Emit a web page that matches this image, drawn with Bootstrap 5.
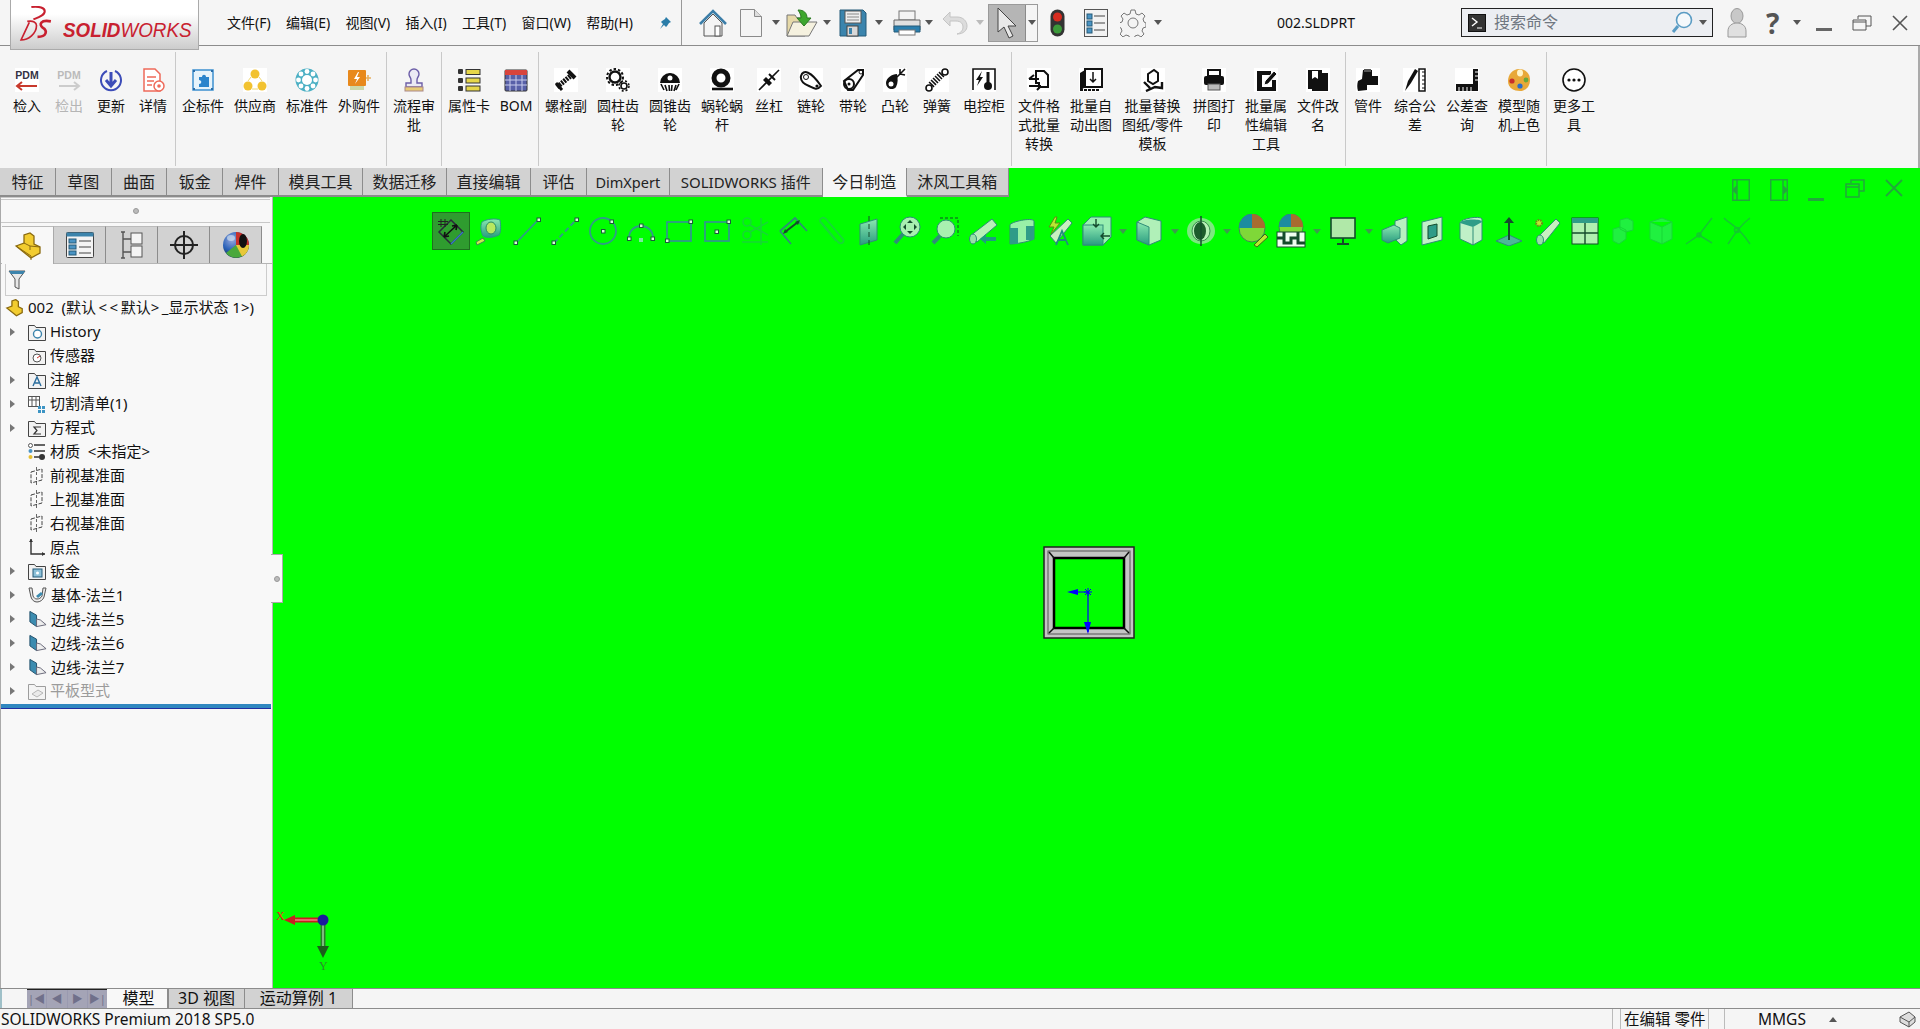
<!DOCTYPE html>
<html lang="zh-CN">
<head>
<meta charset="UTF-8">
<title>SOLIDWORKS Premium 2018 SP5.0 - 002.SLDPRT</title>
<link href="https://cdn.jsdelivr.net/npm/bootstrap@5.3.3/dist/css/bootstrap.min.css" rel="stylesheet">
<style>
    html, body { height: 100%; overflow: hidden; }
    body { background: #f5f5f5; color: #111; font-family: "Noto Sans", "Noto Sans CJK SC", "Liberation Sans", sans-serif; font-size: 14px; line-height: 19px; }
    svg { display: block; flex: none; }
    .app-shell { height: 1029px; width: 1920px; }

    /* title bar */
    .title-bar { height: 46px; border-bottom: 1px solid #8c8c8c; flex: none; }
    .logo-box { left: 10px; top: -2px; width: 189px; height: 52px; z-index: 5; background: linear-gradient(#fff 30%, #ccc); border: 1px solid #aaa; }
    .logo-mark { left: 7px; top: 7px; }
    .logo-word { left: 52px; top: 17px; color: #c8202f; font: italic 400 20px/28px "Liberation Sans", sans-serif; white-space: nowrap; transform: scaleX(.94); transform-origin: left; }
    .logo-word b { font-weight: 700; }
    .menu-zone { width: 682px; padding: 0 9px 0 227px; height: 45px; gap: 15.3px; border-right: 1px solid #999; flex: none; }
    .menu-item { white-space: nowrap; font-size: 14px; }
    .dd { width: 0; height: 0; border: 4px solid transparent; border-top: 5px solid #555; border-bottom: 0; flex: none; }
    .dd-off { border-top-color: #bbb; }
    .sp3 { margin-left: 3px; } .sp4 { margin-left: 4px; } .sp5 { margin-left: 5px; } .sp6 { margin-left: 6px; }
    .sp8 { margin-left: 8px; } .sp9 { margin-left: 9px; } .sp10 { margin-left: 10px; } .sp12 { margin-left: 12px; }
    .sp13 { margin-left: 13px; } .sp14 { margin-left: 14px; } .sp15 { margin-left: 15px; } .sp17 { margin-left: 17px; }
    .sp19 { margin-left: 19px; } .sp20 { margin-left: 20px; }
    .pick-tool { width: 50px; height: 38px; border: 1px solid #9a9a9a; }
    .pick-on { width: 37px; background: #b5b5b5; border-right: 1px solid #8a8a8a; }
    .file-name { width: 73px; margin-left: 115px; white-space: nowrap; font-size: 14px; text-align: center; }
    .search-box { width: 252px; height: 29px; margin-left: 111px; background: #eceef2; border: 1px solid #222; padding: 0 5px 0 6px; }
    .search-text { margin-left: 8px; font-size: 16px; color: #6f7680; }
    .help-mark { font-size: 28px; line-height: 1; font-weight: 700; color: #555; }

    /* ribbon */
    .ribbon { height: 122px; padding-left: 5px; flex: none; border-right: 2px solid #aaa; }
    .rib-group { padding: 0 1px; margin: 6px 0 2px; border-right: 1px solid #c9c9c9; }
    .rib-group:last-child { border-right: 0; }
    .rib-btn { width: 52px; padding: 16px 3px 0; text-align: center; }
    .rib-btn svg { margin: 0 auto 4px; }
    .rib-sm { width: 42px; }
    .rib-wide { width: 71px; padding-left: 0; padding-right: 0; }
    .rib-off { color: #b5b5b5; }

    /* work area */
    .work-area { background: #0f0; min-height: 0; }
    .tab-row { height: 29px; flex: none; }
    .cm-tab { height: 29px; width: 55.8px; font-size: 16px; line-height: 28px; text-align: center; white-space: nowrap; background: #d2d2d2; border-right: 1px solid #8c8c8c; border-bottom: 2px solid #8c8c8c; color: #222; flex: none; }
    .cm-tab4 { width: 84px; }
    .cm-tab5 { width: 102px; }
    .cm-dim { width: 83px; font-size: 14.5px; }
    .cm-addin { width: 153px; font-size: 15px; }
    .cm-tab-on { background: #f5f5f5; border-bottom-color: #f5f5f5; }
    .win-ctl { padding: 11px 17px 0 0; gap: 20px; }
    .win-ctl svg { stroke: #22a83c; }
    .main-row { min-height: 0; }
    .side-panel { width: 273px; background: #f8f8f8; border-left: 1px solid #aaa; border-right: 1px solid #b5b5b5; font-size: 15px; flex: none; }
    .grip-row { height: 26px; margin-right: 2px; border-top: 3px double #c8c8c8; border-bottom: 1px solid #c8c8c8; }
    .grip-dot { width: 6px; height: 6px; border-radius: 50%; background: #bbb; border: 1px solid #999; }
    .pane-tabs { margin-top: 3px; height: 38px; padding-left: 1px; border-bottom: 1px solid #b5b5b5; }
    .pane-tab { width: 52px; height: 37px; background: #d2d2d2; border-right: 1px solid #8c8c8c; border-top: 1px solid #bbb; }
    .pane-tab-on { background: #f8f8f8; height: 38px; border-right: 1px solid #aaa; }
    .filter-box { margin: 0 5px 0 4px; height: 32px; border: 1px solid #ccc; border-top: 0; padding-left: 2px; }
    .tree-list { margin: 0; padding: 0; list-style: none; }
    .tree-row { height: 23.95px; white-space: nowrap; }
    .tree-arrow { width: 0; height: 0; margin-left: 9px; border: 4px solid transparent; border-left: 5px solid #777; border-right: 0; flex: none; }
    .tree-slot { width: 27px; flex: none; }
    .tree-arrow + svg { margin-left: 13px; }
    .tree-root { margin-left: 4px; }
    .tree-label { position: relative; margin-left: 4px; }
    .tree-off { color: #9b9b9b; }
    .tree-end { height: 5px; margin: 1px 1px 0 0; background: #3088c0; border-bottom: 1px solid #2030a0; }
    .sash-grip { left: 271px; top: 357px; width: 12px; height: 49px; background: #f8f8f8; border: 1px solid #aaa; border-left: 0; z-index: 3; }
    .hud-bar { padding: 15px 0 0 159px; }
    .hud-cell { width: 38px; height: 38px; }
    .hud-on { background: #2f9c2f; outline: 1px solid #1f6e1f; outline-offset: -1px; }
    .hud-dd { width: 14px; height: 38px; }
    .hud-dd .dd { border-top-color: #3c9c4c; }
    .part-view { left: 770px; top: 349px; }
    .triad-view { left: 3px; top: 711px; }

    /* bottom */
    .sheet-row { height: 21px; flex: none; border-top: 1px solid #8c8c8c; border-bottom: 1px solid #8c8c8c; }
    .sheet-edge { width: 2px; background: #9fc0c8; }
    .sheet-nav { margin-left: 25px; width: 80px; background: #9a9ab0; border-top: 1px solid #222; gap: 1px; }
    .sheet-nav span { flex: 1; background: #a4a4b6; color: #70708a; font-size: 11px; line-height: 18px; text-align: center; }
    .sheet-tab { font-size: 16px; line-height: 18px; text-align: center; background: #d2d2d2; border-right: 1px solid #8c8c8c; white-space: nowrap; }
    .sheet-a { width: 61px; background: #f8f8f8; padding-left: 3px; }
    .sheet-b { width: 77px; border-left: 1px solid #8c8c8c; }
    .sheet-c { width: 108px; }
    .status-row { height: 20px; font-size: 15.5px; line-height: 20px; flex: none; white-space: nowrap; }
    .status-name { width: 1612px; padding-left: 1px; flex: none; }
    .status-gap { width: 8px; border-left: 1px solid #bbb; flex: none; }
    .status-edit { width: 89px; padding-left: 3px; font-size: 15.5px; border-left: 1px solid #bbb; border-right: 1px solid #bbb; flex: none; }
    .status-units { margin-left: 15px; padding-left: 33px; border-left: 1px solid #bbb; flex: 1; }
    .status-up { width: 0; height: 0; margin-left: 23px; border: 4px solid transparent; border-bottom: 5px solid #555; border-top: 0; }
</style>
</head>
<body>
<svg width="0" height="0" class="position-absolute">
    <defs>
        <linearGradient id="teal" x1="0" y1="0" x2="0" y2="1"><stop offset="0" stop-color="#8be8b0"/><stop offset="1" stop-color="#2a9c80"/></linearGradient>
        <radialGradient id="ball" cx=".35" cy=".3" r=".8"><stop offset="0" stop-color="#9ad"/><stop offset=".5" stop-color="#2a62b8"/><stop offset="1" stop-color="#123"/></radialGradient>
    </defs>
    <symbol id="fld" viewBox="0 0 18 18"><path d="M.5 5V2.5h6l1.5 2h9.5v13H.5z" fill="#f2f2f2" stroke="#444"/></symbol>
    <symbol id="plane" viewBox="0 0 18 18"><path d="M3 5l11-3v11l-11 3z" fill="none" stroke="#444" stroke-dasharray="4 1.5"/><path d="M8.500 0v18" stroke="#666" stroke-dasharray="3 2"/></symbol>
    <symbol id="edge" viewBox="0 0 20 18"><path d="M2 1l7 4v12l-7-5z" fill="#3c8cb0" stroke="#1d4d68"/><path d="M9 17l10-2-6-5-4-1z" fill="#eee" stroke="#667"/></symbol>
</svg>

<div class="app-shell d-flex flex-column position-relative">
    <!-- title bar -->
    <div class="title-bar d-flex align-items-center position-relative">
        <div class="logo-box position-absolute">
            <svg class="logo-mark position-absolute" width="37" height="36" viewBox="0 0 36 35" fill="none" stroke="#c8202f" stroke-width="2"><path d="M13 1C21 0 26 2 26 5 26 9 20 11 15 13" /><path d="M32 15C22 13 20 18 24 21 29 24 28 30 19 30" stroke-width="2.6"/><path d="M9 15C15 14 18 16 18 19 18 27 10 33 3 33L11 16" stroke-width="1.6"/></svg>
            <span class="logo-word position-absolute"><b>SOLID</b>WORKS</span>
        </div>
        <div class="menu-zone d-flex align-items-center">
            <span class="menu-item">文件(F)</span><span class="menu-item">编辑(E)</span><span class="menu-item">视图(V)</span><span class="menu-item">插入(I)</span><span class="menu-item">工具(T)</span><span class="menu-item">窗口(W)</span><span class="menu-item">帮助(H)</span>
            <svg class="ms-auto" width="14" height="14" viewBox="0 0 14 14"><path d="M8 1l5 5-2 1-2 3-1 1-2-2-4 4 3-5-2-2 1-1 3-2z" fill="#2a7ca8"/></svg>
        </div>
        <svg class="sp17" width="28" height="28" viewBox="0 0 28 28"><path d="M5 14v13h18V14L14 5z" fill="#f4f4f4" stroke="#555"/><path d="M1 15L14 2l13 13" fill="none" stroke="#3c7ea8" stroke-width="2.6"/><rect x="16" y="17" width="5" height="10" fill="#fff" stroke="#555"/></svg>
        <svg class="sp13" width="22" height="28" viewBox="0 0 22 28"><path d="M.5.5h14l7 7v20H.5z" fill="#f4f4f4" stroke="#8a8a8a"/><path d="M14.5.5v7h7" fill="#ddd" stroke="#8a8a8a"/></svg>
        <span class="dd sp10"></span>
        <svg class="sp6" width="32" height="28" viewBox="0 0 32 28"><path d="M1 27V6h8l2 3h8v18z" fill="#e6d9a8" stroke="#777"/><path d="M1 27l6-14h24l-8 14z" fill="#f5f1df" stroke="#777"/><path d="M12 1c6 0 9 3 9 8h4l-7 8-7-8h4c0-3-1-5-3-8z" fill="#3ea62e" stroke="#2a7a20"/></svg>
        <span class="dd sp5"></span>
        <svg class="sp8" width="28" height="28" viewBox="0 0 28 28"><path d="M1 1h23l3 3v23H1z" fill="#3b84ad" stroke="#245a78"/><rect x="6" y="2" width="16" height="12" fill="#eee" stroke="#555"/><path d="M8 5h12M8 8h12M8 11h12" stroke="#888"/><rect x="8" y="17" width="11" height="10" fill="#d8d8d8" stroke="#444"/><rect x="10" y="19" width="3" height="6" fill="#3b84ad"/></svg>
        <span class="dd sp8"></span>
        <svg class="sp9" width="30" height="26" viewBox="0 0 30 26"><rect x="7" y="1" width="16" height="9" fill="#f4f4f4" stroke="#777"/><path d="M2 10h26v10H2z" fill="#e0e0e0" stroke="#666"/><path d="M2 16h26v6H2z" fill="#2b7fae" stroke="#245a78"/><rect x="7" y="20" width="16" height="5" fill="#fff" stroke="#777"/></svg>
        <span class="dd sp3"></span>
        <svg class="sp8" width="27" height="26" viewBox="0 0 27 26"><path d="M9 2L2 9l7 7V11h6c5 0 7 3 7 6s-2 6-6 7c7 0 10-4 10-8 0-5-4-9-10-9H9z" fill="#dcdcdc" stroke="#c4c4c4"/></svg>
        <span class="dd dd-off sp8"></span>
        <div class="pick-tool d-flex align-items-stretch sp4">
            <div class="pick-on d-flex align-items-center justify-content-center"><svg width="22" height="32" viewBox="0 0 22 32"><path d="M2 1v24l6-5 5 11 4-2-5-10h8z" fill="#e8e8e8" stroke="#444"/></svg></div>
            <div class="flex-grow-1 d-flex align-items-center justify-content-center"><span class="dd"></span></div>
        </div>
        <svg class="sp12" width="15" height="28" viewBox="0 0 15 28"><rect x=".5" y=".5" width="14" height="27" rx="7" fill="#333"/><circle cx="7.5" cy="8" r="4.5" fill="#d62c20"/><circle cx="7.5" cy="20" r="4.5" fill="#3c9a3a"/></svg>
        <svg class="sp19" width="24" height="28" viewBox="0 0 24 28"><rect x=".5" y=".5" width="23" height="27" fill="#f2f2f2" stroke="#555"/><rect x="3" y="5" width="5" height="5" fill="#4a94c4" stroke="#245a78"/><rect x="3" y="12" width="5" height="5" fill="#4a94c4" stroke="#245a78"/><rect x="3" y="19" width="5" height="5" fill="#4a94c4" stroke="#245a78"/><path d="M10 7h11M10 14h11M10 21h11" stroke="#444"/></svg>
        <svg class="sp12" width="26" height="28" viewBox="0 0 26 28"><path d="M11 1h4l1 4 3 1 3-2 3 3-2 3 1 3 2 1v4l-3 1-1 3 2 3-3 3-3-2-3 1-1 3h-4l-1-3-3-1-3 2-3-3 2-3-1-3-2-1v-4l3-1 1-3-2-3 3-3 3 2 3-1z" fill="#f4f4f4" stroke="#777"/><circle cx="13" cy="14" r="5" fill="#f4f4f4" stroke="#777"/></svg>
        <span class="dd sp8"></span>
        <span class="file-name">002.SLDPRT</span>
        <div class="search-box d-flex align-items-center">
            <svg width="18" height="18" viewBox="0 0 18 18"><rect x=".5" y=".5" width="17" height="17" fill="#333" stroke="#111"/><path d="M4 4l5 4-5 4" fill="none" stroke="#fff" stroke-width="1.4"/><path d="M9 14h5" stroke="#fff"/></svg>
            <span class="search-text">搜索命令</span>
            <svg class="ms-auto" width="22" height="24" viewBox="0 0 22 24"><circle cx="13" cy="9" r="7.5" fill="#f4f8fb" stroke="#5a9cc4" stroke-width="1.6"/><path d="M7 15l-5 6" stroke="#5a9cc4" stroke-width="3"/></svg>
            <span class="dd sp6"></span>
        </div>
        <svg class="sp14" width="20" height="30" viewBox="0 0 20 30"><ellipse cx="10" cy="8" rx="6" ry="7.5" fill="#c8c8c8" stroke="#999"/><path d="M1 29v-6c0-5 4-8 9-8s9 3 9 8v6z" fill="#e0e0e0" stroke="#999"/></svg>
        <span class="sp19 help-mark">?</span>
        <span class="dd sp14"></span>
        <svg class="sp15" width="16" height="16" viewBox="0 0 16 16"><path d="M0 14.5h16" stroke="#666" stroke-width="3"/></svg>
        <svg class="sp20" width="20" height="16" viewBox="0 0 20 16"><path d="M6 4V1h13v10h-5M1 5h13v10H1z" fill="none" stroke="#555"/><path d="M1 7h13" stroke="#555"/></svg>
        <svg class="sp20" width="16" height="16" viewBox="0 0 16 16"><path d="M1 1l14 14M15 1L1 15" stroke="#555" stroke-width="1.6"/></svg>
    </div>

    <!-- ribbon -->
    <div class="ribbon d-flex align-items-stretch">
        <div class="rib-group d-flex">
            <div class="rib-btn rib-sm"><svg width="24" height="24" viewBox="0 0 24 24"><rect width="24" height="24" fill="#fff"/><text x="12" y="11" text-anchor="middle" font-family="Liberation Sans" font-size="10.5" font-weight="700" fill="#334">PDM</text><path d="M2 18h20M7 14l-5 4 5 4" fill="none" stroke="#c8392c" stroke-width="2"/></svg>检入</div>
            <div class="rib-btn rib-sm rib-off"><svg width="24" height="24" viewBox="0 0 24 24"><text x="12" y="11" text-anchor="middle" font-family="Liberation Sans" font-size="10.5" font-weight="700" fill="#bbb">PDM</text><path d="M2 18h20M17 14l5 4-5 4" fill="none" stroke="#ccc" stroke-width="2"/></svg>检出</div>
            <div class="rib-btn rib-sm"><svg width="24" height="24" viewBox="0 0 24 24"><path d="M8 3a10 10 0 1 0 8 0" fill="none" stroke="#3c4cb8" stroke-width="2"/><path d="M12 4v13M7 12l5 6 5-6" fill="none" stroke="#3c4cb8" stroke-width="3"/></svg>更新</div>
            <div class="rib-btn rib-sm"><svg width="24" height="24" viewBox="0 0 24 24"><path d="M3 1h11l5 5v17H3z" fill="#fff" stroke="#ee6a5a" stroke-width="1.5"/><path d="M6 9h9M6 13h7M6 17h5" stroke="#ee6a5a" stroke-width="1.5"/><circle cx="18" cy="18" r="5" fill="#fff" stroke="#ee6a5a" stroke-width="1.5"/><circle cx="18" cy="18" r="1.8" fill="#ee6a5a"/></svg>详情</div>
        </div>
        <div class="rib-group d-flex">
            <div class="rib-btn"><svg width="24" height="24" viewBox="0 0 24 24"><rect x="2" y="2" width="20" height="20" fill="#e6f3fb" stroke="#3c90d0" stroke-width="1.5"/><path d="M8 9h3c0-3 4-3 4 0h3v10H8v-3c3 0 3-4 0-4z" fill="#2a84cc"/><path d="M2 2h2v2H2zM20 2h2v2h-2zM2 20h2v2H2zM20 20h2v2h-2z" fill="#2a6ca8"/></svg>企标件</div>
            <div class="rib-btn"><svg width="24" height="24" viewBox="0 0 24 24"><rect width="24" height="24" fill="#fff"/><circle cx="12" cy="6" r="4.5" fill="#f2c230"/><circle cx="5" cy="18" r="4.5" fill="#f2c230"/><circle cx="19" cy="18" r="4.5" fill="#f2c230"/><path d="M8 9l-3 4M16 9l3 4M9 21h6" stroke="#f2d870"/></svg>供应商</div>
            <div class="rib-btn"><svg width="24" height="24" viewBox="0 0 24 24"><circle cx="12" cy="12" r="11.5" fill="#4cb0c4"/><circle cx="12" cy="12" r="5" fill="#fff"/><g fill="#fff"><circle cx="12" cy="3.5" r="2.4"/><circle cx="18" cy="6" r="2.4"/><circle cx="20.5" cy="12" r="2.4"/><circle cx="18" cy="18" r="2.4"/><circle cx="12" cy="20.5" r="2.4"/><circle cx="6" cy="18" r="2.4"/><circle cx="3.5" cy="12" r="2.4"/><circle cx="6" cy="6" r="2.4"/></g></svg>标准件</div>
            <div class="rib-btn"><svg width="24" height="24" viewBox="0 0 24 24"><rect x="1" y="2" width="18" height="16" rx="1" fill="#e8891c"/><path d="M11 4l-4 7h3l-2 5 5-7h-3l2-5z" fill="#fff"/><path d="M19 10h5M21 7v6" stroke="#e8b060" stroke-width="1.6"/><rect x="3" y="18" width="14" height="4" fill="#cdd8a8"/></svg>外购件</div>
        </div>
        <div class="rib-group d-flex">
            <div class="rib-btn"><svg width="24" height="24" viewBox="0 0 24 24"><path d="M9 12c0-3-2-3-2-6a5 5 0 0 1 10 0c0 3-2 3-2 6v3h5v4H4v-4h5z" fill="#eceaf4" stroke="#6c5ea8" stroke-width="1.4"/><rect x="3" y="19" width="18" height="4" fill="#e8cc78" stroke="#a88"/></svg>流程审批</div>
        </div>
        <div class="rib-group d-flex">
            <div class="rib-btn"><svg width="24" height="24" viewBox="0 0 24 24"><g fill="#333"><rect x="1" y="1" width="5" height="5" rx="1"/><rect x="1" y="10" width="5" height="5" rx="1"/><rect x="1" y="18" width="5" height="5" rx="1"/></g><g fill="#e6d64a" stroke="#333"><rect x="9" y="1.5" width="14" height="5"/><rect x="9" y="10" width="14" height="5"/><rect x="9" y="18" width="14" height="5"/></g></svg>属性卡</div>
            <div class="rib-btn rib-sm"><svg width="24" height="24" viewBox="0 0 24 24"><rect x="1" y="2" width="22" height="21" rx="1" fill="#5860a8" stroke="#333"/><rect x="1" y="2" width="22" height="5" fill="#d8443c"/><path d="M6 7v16M12 7v16M18 7v16M1 12h22M1 17h22" stroke="#c8ccec"/></svg>BOM</div>
        </div>
        <div class="rib-group d-flex">
            <div class="rib-btn"><svg width="24" height="24" viewBox="0 0 24 24"><rect width="24" height="24" fill="#fff"/><path d="M3 19L19 6" stroke="#111" stroke-width="5" stroke-dasharray="2 1"/><path d="M14 3l7 7" stroke="#111" stroke-width="4"/><path d="M2 15l6 7" stroke="#111" stroke-width="3"/></svg>螺栓副</div>
            <div class="rib-btn"><svg width="24" height="24" viewBox="0 0 24 24"><rect width="24" height="24" fill="#fff"/><circle cx="9" cy="9" r="5.5" fill="none" stroke="#111" stroke-width="2.4"/><circle cx="9" cy="9" r="8" fill="none" stroke="#111" stroke-width="2" stroke-dasharray="2.5 2"/><circle cx="18" cy="18" r="3" fill="none" stroke="#111" stroke-width="1.6"/><circle cx="18" cy="18" r="5" fill="none" stroke="#111" stroke-width="1.5" stroke-dasharray="2 2"/></svg>圆柱齿轮</div>
            <div class="rib-btn"><svg width="24" height="24" viewBox="0 0 24 24"><rect width="24" height="24" fill="#fff"/><path d="M2 15A10 10 0 0 1 22 15" fill="#111"/><circle cx="12" cy="10" r="3.5" fill="#fff" stroke="#111" stroke-width="2"/><path d="M3 16l3 6M7 17l2 6M11 17l.5 6M14 17l-.5 6M18 17l-2 6M21 16l-3 6" stroke="#111" stroke-width="1.6"/></svg>圆锥齿轮</div>
            <div class="rib-btn"><svg width="24" height="24" viewBox="0 0 24 24"><rect width="24" height="24" fill="#fff"/><circle cx="11" cy="10" r="7" fill="none" stroke="#111" stroke-width="5"/><path d="M2 21h21" stroke="#111" stroke-width="2.6"/></svg>蜗轮蜗杆</div>
            <div class="rib-btn rib-sm"><svg width="24" height="24" viewBox="0 0 24 24"><rect width="24" height="24" fill="#fff"/><path d="M2 22L22 2" stroke="#111" stroke-width="1.6"/><path d="M6 12l6 6 3-3-6-6z" fill="#111"/><path d="M12 6l6 6" stroke="#111" stroke-width="2"/></svg>丝杠</div>
            <div class="rib-btn rib-sm"><svg width="24" height="24" viewBox="0 0 24 24"><rect width="24" height="24" fill="#fff"/><path d="M2 8c2-7 10-5 20 10-4 5-8 2-12 0-5-2-9-5-8-10z" fill="none" stroke="#111" stroke-width="2"/><circle cx="7" cy="9" r="2.5" fill="none" stroke="#111"/><circle cx="18" cy="18" r="1.6" fill="#111"/></svg>链轮</div>
            <div class="rib-btn rib-sm"><svg width="24" height="24" viewBox="0 0 24 24"><rect width="24" height="24" fill="#fff"/><path d="M3 13L17 2h5v5L12 22H7z" fill="none" stroke="#111" stroke-width="2"/><circle cx="8" cy="16" r="5" fill="none" stroke="#111" stroke-width="2"/><circle cx="8" cy="16" r="1.5" fill="#111"/><circle cx="20" cy="4" r="2" fill="none" stroke="#111"/></svg>带轮</div>
            <div class="rib-btn rib-sm"><svg width="24" height="24" viewBox="0 0 24 24"><rect width="24" height="24" fill="#fff"/><path d="M3 15c0-5 6-9 11-9 1 5 1 9-1 13-3 4-10 2-10-4z" fill="#111"/><circle cx="8" cy="16" r="2.5" fill="#fff"/><path d="M14 9l8-8M17 6l5 1M17 6l0-5" stroke="#111" stroke-width="1.6"/></svg>凸轮</div>
            <div class="rib-btn rib-sm"><svg width="24" height="24" viewBox="0 0 24 24"><rect width="24" height="24" fill="#fff"/><circle cx="20" cy="4" r="3" fill="none" stroke="#111" stroke-width="1.6"/><circle cx="4" cy="20" r="3" fill="none" stroke="#111" stroke-width="1.6"/><path d="M6 17L17 6" stroke="#111" stroke-width="7" stroke-dasharray="1.6 1.2"/></svg>弹簧</div>
            <div class="rib-btn"><svg width="24" height="24" viewBox="0 0 24 24"><rect width="24" height="24" fill="#fff"/><path d="M1 22V1h22v21" fill="none" stroke="#111" stroke-width="1.6"/><path d="M10 3L4 12h3l-2 6 6-9H8z" fill="#111"/><path d="M16 4v12" stroke="#111" stroke-width="3"/><circle cx="16" cy="18" r="4" fill="#111"/></svg>电控柜</div>
        </div>
        <div class="rib-group d-flex">
            <div class="rib-btn"><svg width="24" height="24" viewBox="0 0 24 24"><rect width="24" height="24" fill="#fff"/><path d="M9 3h8l4 4v12h-9v-4H9z" fill="#fff" stroke="#111" stroke-width="2"/><path d="M2 11h10M7 7l-5 4M2 18h12M10 22l4-4" stroke="#111" stroke-width="2"/></svg>文件格式批量转换</div>
            <div class="rib-btn"><svg width="24" height="24" viewBox="0 0 24 24"><rect width="24" height="24" fill="#fff"/><path d="M1 23V5l5-3v17z" fill="#111"/><rect x="6" y="1" width="17" height="18" fill="#fff" stroke="#111" stroke-width="2"/><path d="M14 4v10M11 11l3 3 3-3" fill="none" stroke="#111" stroke-width="1.5"/><path d="M1 22h19" stroke="#111" stroke-width="2" stroke-dasharray="3 1"/></svg>批量自动出图</div>
            <div class="rib-btn rib-wide"><svg width="24" height="24" viewBox="0 0 24 24"><rect width="24" height="24" fill="#fff"/><path d="M7 6l6-4 4 3v8l-5 3-5-3z" fill="#fff" stroke="#111" stroke-width="2"/><path d="M3 14l6 6M5 23l9-4 7 1v-6" fill="none" stroke="#111" stroke-width="2.4"/></svg>批量替换<br>图纸/零件<br>模板</div>
            <div class="rib-btn"><svg width="24" height="24" viewBox="0 0 24 24"><rect width="24" height="24" fill="#fff"/><rect x="6" y="2" width="12" height="6" fill="#fff" stroke="#111" stroke-width="2"/><rect x="2" y="8" width="20" height="9" rx="2" fill="#111"/><rect x="6" y="16" width="12" height="6" fill="#bbb" stroke="#555"/></svg>拼图打印</div>
            <div class="rib-btn"><svg width="24" height="24" viewBox="0 0 24 24"><rect width="24" height="24" fill="#fff"/><path d="M3 3h14v4H8v12h10v-7h4v11H3z" fill="#111"/><path d="M10 17l1-4 9-10 3 3-9 10z" fill="#111" stroke="#fff"/></svg>批量属性编辑工具</div>
            <div class="rib-btn"><svg width="24" height="24" viewBox="0 0 24 24"><rect width="24" height="24" fill="#fff"/><path d="M2 2h14v19H2z" fill="#111"/><path d="M6 3h6v8l-3-2-3 2z" fill="#fff"/><path d="M16 5h6v18H6v-2h10z" fill="#111"/></svg>文件改名</div>
        </div>
        <div class="rib-group d-flex">
            <div class="rib-btn rib-sm"><svg width="24" height="24" viewBox="0 0 24 24"><rect width="24" height="24" fill="#fff"/><path d="M7 2h9v6h6v9H11v5l-9 1c-1-3-1-7 0-10l4-2z" fill="#111"/><rect x="8" y="1" width="7" height="3" fill="#555"/></svg>管件</div>
            <div class="rib-btn"><svg width="24" height="24" viewBox="0 0 24 24"><rect width="24" height="24" fill="#fff"/><path d="M2 23l3-10 7-12 3 2-7 12z" fill="#111"/><rect x="16" y="1" width="6" height="22" fill="#fff" stroke="#111" stroke-width="1.5"/><path d="M19 4h3M19 8h3M19 12h3M19 16h3M19 20h3" stroke="#111"/></svg>综合公差</div>
            <div class="rib-btn"><svg width="24" height="24" viewBox="0 0 24 24"><rect width="24" height="24" fill="#fff"/><path d="M1 16h17V1h5v22H1z" fill="#111"/><path d="M20 4h3M20 8h3M20 12h3M4 19v4M8 19v4M12 19v4M16 19v4" stroke="#fff"/></svg>公差查询</div>
            <div class="rib-btn"><svg width="24" height="24" viewBox="0 0 24 24"><path d="M12 1c7 0 11 5 11 11s-4 11-10 11c-6 0-12-3-12-10C1 6 6 1 12 1z" fill="#e8a838"/><circle cx="5" cy="13" r="2.6" fill="#c8302a"/><circle cx="13" cy="18" r="2.6" fill="#2a6cc8"/><circle cx="19" cy="12" r="2.4" fill="#6aa83a"/><ellipse cx="13" cy="5" rx="3" ry="3.4" fill="#fff4c8"/></svg>模型随机上色</div>
        </div>
        <div class="rib-group d-flex">
            <div class="rib-btn"><svg width="24" height="24" viewBox="0 0 24 24"><circle cx="12" cy="12" r="11" fill="#fff" stroke="#111" stroke-width="1.6"/><circle cx="7" cy="12" r="1.6" fill="#111"/><circle cx="12" cy="12" r="1.6" fill="#111"/><circle cx="17" cy="12" r="1.6" fill="#111"/></svg>更多工具</div>
        </div>
    </div>

    <!-- work area -->
    <div class="work-area flex-grow-1 d-flex flex-column position-relative">
        <div class="tab-row d-flex">
            <div class="cm-tab">特征</div><div class="cm-tab">草图</div><div class="cm-tab">曲面</div><div class="cm-tab">钣金</div><div class="cm-tab">焊件</div><div class="cm-tab cm-tab4">模具工具</div><div class="cm-tab cm-tab4">数据迁移</div><div class="cm-tab cm-tab4">直接编辑</div><div class="cm-tab">评估</div><div class="cm-tab cm-dim">DimXpert</div><div class="cm-tab cm-addin">SOLIDWORKS 插件</div><div class="cm-tab cm-tab4 cm-tab-on">今日制造</div><div class="cm-tab cm-tab5">沐风工具箱</div>
            <div class="win-ctl d-flex ms-auto">
                <svg width="18" height="22" viewBox="0 0 18 22" fill="none" stroke-width="1.5"><rect x=".75" y=".75" width="16.5" height="20.5"/><path d="M5 1v20M4 8l-3 3 3 3z" fill="#22a83c"/></svg>
                <svg width="18" height="22" viewBox="0 0 18 22" fill="none" stroke-width="1.5"><rect x=".75" y=".75" width="16.5" height="20.5"/><path d="M13 1v20M14 8l3 3-3 3z" fill="#22a83c"/></svg>
                <svg width="17" height="22" viewBox="0 0 17 22"><path d="M0 20.5h16" stroke-width="3"/></svg>
                <svg width="20" height="20" viewBox="0 0 20 20" fill="none" stroke-width="1.5"><path d="M6 4V1h13v11h-5M1 5h13v13H1z"/><path d="M1 8h13"/></svg>
                <svg width="18" height="18" viewBox="0 0 18 18"><path d="M1 1l16 16M17 1L1 17" stroke-width="1.8"/></svg>
            </div>
        </div>
        <div class="main-row d-flex flex-grow-1 position-relative">
            <div class="side-panel d-flex flex-column">
                <div class="grip-row d-flex align-items-center justify-content-center"><span class="grip-dot"></span></div>
                <div class="pane-tabs d-flex">
                    <div class="pane-tab pane-tab-on d-flex align-items-center justify-content-center"><svg width="28" height="28" viewBox="0 0 28 28"><path d="M2 14l8-3V3l6-2 4 3v8l6 3v6l-9 5z" fill="#f2cc30" stroke="#8a6a10" stroke-width="1.3"/><path d="M2 14l15 10v4M10 11l6 3v4M16 14l10 1" fill="none" stroke="#8a6a10"/></svg></div>
                    <div class="pane-tab d-flex align-items-center justify-content-center"><svg width="28" height="26" viewBox="0 0 28 26"><rect x=".5" y=".5" width="27" height="25" rx="1" fill="#f4f4f4" stroke="#444"/><rect x=".5" y=".5" width="27" height="4" fill="#3c84ac"/><g fill="#4a94c4" stroke="#245a78"><rect x="3" y="7" width="7" height="4"/><rect x="3" y="13" width="7" height="4"/><rect x="3" y="19" width="7" height="4"/></g><path d="M13 9h12M13 15h12M13 21h12" stroke="#444"/></svg></div>
                    <div class="pane-tab d-flex align-items-center justify-content-center"><svg width="24" height="28" viewBox="0 0 24 28" fill="#f4f4f4" stroke="#555"><path d="M3 1v26M1 1h4M3 8h8M3 21h8M1 27h4" fill="none" stroke-width="1.4"/><rect x="11" y="2" width="11" height="11"/><rect x="11" y="15" width="11" height="11"/></svg></div>
                    <div class="pane-tab d-flex align-items-center justify-content-center"><svg width="28" height="28" viewBox="0 0 28 28" fill="none" stroke="#222" stroke-width="2"><circle cx="14" cy="14" r="9"/><path d="M14 0v28M0 14h28"/></svg></div>
                    <div class="pane-tab d-flex align-items-center justify-content-center"><svg width="28" height="28" viewBox="0 0 28 28"><circle cx="14" cy="14" r="13" fill="url(#ball)"/><path d="M14 14L27 14A13 13 0 0 1 4 22z" fill="#4aa83c"/><path d="M14 14h13a13 13 0 0 1-7 11.5z" fill="#e8c838"/><path d="M14 1a13 13 0 0 1 13 13H14z" fill="#c8302a"/><ellipse cx="21" cy="10" rx="4" ry="7" fill="#111"/><ellipse cx="9" cy="7" rx="4" ry="3" fill="#cde" opacity=".7"/></svg></div>
                </div>
                <div class="filter-box d-flex align-items-center"><svg width="18" height="20" viewBox="0 0 18 20"><path d="M1 1h16l-6 8v10l-4-2V9z" fill="#e8e8e8" stroke="#555"/><path d="M1 1h16l-2 3H3z" fill="#3c84ac"/></svg></div>
                <ul class="tree-list">
                    <li class="tree-row d-flex align-items-center"><svg class="tree-root" width="19" height="18" viewBox="0 0 28 28"><path d="M2 14l8-3V3l6-2 4 3v8l6 3v6l-9 5z" fill="#f2cc30" stroke="#8a6a10" stroke-width="2"/></svg><span class="tree-label">002&nbsp; (默认&thinsp;&lt;&thinsp;&lt;&thinsp;默认&gt;&thinsp;_显示状态 1&gt;)</span></li>
                    <li class="tree-row d-flex align-items-center"><span class="tree-arrow"></span><svg width="18" height="18" viewBox="0 0 18 18"><use href="#fld"/><circle cx="9.5" cy="11" r="4" fill="#fff" stroke="#3c84ac" stroke-width="1.4"/></svg><span class="tree-label">History</span></li>
                    <li class="tree-row d-flex align-items-center"><span class="tree-slot"></span><svg width="18" height="18" viewBox="0 0 18 18"><use href="#fld"/><circle cx="9" cy="11" r="4" fill="#fff" stroke="#555"/><path d="M9 11l3-2" stroke="#c8302a"/></svg><span class="tree-label">传感器</span></li>
                    <li class="tree-row d-flex align-items-center"><span class="tree-arrow"></span><svg width="18" height="18" viewBox="0 0 18 18"><use href="#fld"/><path d="M5 15l4-9 4 9M7 12h4" fill="none" stroke="#2a6c9c" stroke-width="1.4"/></svg><span class="tree-label">注解</span></li>
                    <li class="tree-row d-flex align-items-center"><span class="tree-arrow"></span><svg width="18" height="18" viewBox="0 0 18 18"><rect x=".5" y="1.5" width="11" height="10" fill="#fff" stroke="#555"/><path d="M.5 5h11M4 2v9M8 2v9" stroke="#555"/><path d="M10 11h3v3h-3zM14 11h3v3h-3zM10 15h3v3h-3zM14 15h3v3h-3z" fill="#3c94c4"/></svg><span class="tree-label">切割清单(1)</span></li>
                    <li class="tree-row d-flex align-items-center"><span class="tree-arrow"></span><svg width="18" height="18" viewBox="0 0 18 18"><use href="#fld"/><path d="M13 8H6l3 3.5L6 15h7" fill="none" stroke="#333" stroke-width="1.2"/></svg><span class="tree-label">方程式</span></li>
                    <li class="tree-row d-flex align-items-center"><span class="tree-slot"></span><svg width="18" height="18" viewBox="0 0 18 18"><circle cx="2.5" cy="2.5" r="2" fill="#fff" stroke="#555"/><circle cx="2.5" cy="8" r="2" fill="#4a94c4"/><circle cx="2.5" cy="14" r="2" fill="#e8c030"/><path d="M6 2h11M6 8h11M6 14h5" stroke="#333" stroke-width="1.6"/><circle cx="14" cy="14" r="3" fill="#333"/></svg><span class="tree-label">材质 &nbsp;&lt;未指定&gt;</span></li>
                    <li class="tree-row d-flex align-items-center"><span class="tree-slot"></span><svg width="18" height="18" viewBox="0 0 18 18"><use href="#plane"/></svg><span class="tree-label">前视基准面</span></li>
                    <li class="tree-row d-flex align-items-center"><span class="tree-slot"></span><svg width="18" height="18" viewBox="0 0 18 18"><use href="#plane"/></svg><span class="tree-label">上视基准面</span></li>
                    <li class="tree-row d-flex align-items-center"><span class="tree-slot"></span><svg width="18" height="18" viewBox="0 0 18 18"><use href="#plane"/></svg><span class="tree-label">右视基准面</span></li>
                    <li class="tree-row d-flex align-items-center"><span class="tree-slot"></span><svg width="18" height="18" viewBox="0 0 18 18"><path d="M3 1v15h14" fill="none" stroke="#333" stroke-width="1.4"/><path d="M1 4l2-3 2 3zM14 14l3 2-3 2z" fill="#333"/></svg><span class="tree-label">原点</span></li>
                    <li class="tree-row d-flex align-items-center"><span class="tree-arrow"></span><svg width="18" height="18" viewBox="0 0 18 18"><use href="#fld"/><rect x="5" y="7" width="9" height="8" fill="#8cc0d8" stroke="#245a78"/><circle cx="9.5" cy="11" r="1.5" fill="#fff"/></svg><span class="tree-label">钣金</span></li>
                    <li class="tree-row d-flex align-items-center"><span class="tree-arrow"></span><svg width="19" height="18" viewBox="0 0 19 18"><path d="M1 2l2 9c1 3 3 5 6 5s6-2 7-5l2-9-3 0-1 8c-1 2-3 3-5 3s-3-1-4-3L4 2z" fill="#ececec" stroke="#555"/><path d="M8 10l5-4 2 2-5 4z" fill="#3c8cb0"/></svg><span class="tree-label">基体-法兰1</span></li>
                    <li class="tree-row d-flex align-items-center"><span class="tree-arrow"></span><svg width="19" height="18" viewBox="0 0 20 18"><use href="#edge"/></svg><span class="tree-label">边线-法兰5</span></li>
                    <li class="tree-row d-flex align-items-center"><span class="tree-arrow"></span><svg width="19" height="18" viewBox="0 0 20 18"><use href="#edge"/></svg><span class="tree-label">边线-法兰6</span></li>
                    <li class="tree-row d-flex align-items-center"><span class="tree-arrow"></span><svg width="19" height="18" viewBox="0 0 20 18"><use href="#edge"/></svg><span class="tree-label">边线-法兰7</span></li>
                    <li class="tree-row d-flex align-items-center tree-off"><span class="tree-arrow"></span><svg width="18" height="18" viewBox="0 0 18 18" opacity=".5"><use href="#fld"/><path d="M4 12l6-4 5 3-6 4z" fill="#ddd" stroke="#777"/></svg><span class="tree-label">平板型式</span></li>
                </ul>
                <div class="tree-end"></div>
            </div>
            <div class="sash-grip position-absolute d-flex align-items-center justify-content-center"><span class="grip-dot"></span></div>

            <div class="flex-grow-1 position-relative">
                <div class="hud-bar d-flex">
                    <div class="hud-cell hud-on d-flex align-items-center justify-content-center"><svg width="30" height="30" viewBox="0 0 30 30"><path d="M15 4l12 12-12 12L3 16z" fill="none" stroke="#2a2a3a" stroke-width="1.5"/><path d="M15 28l12-12" stroke="#3878c8" stroke-width="1.5"/><path d="M8 21L21 9M8 21l1-5M8 21l5-1M21 9l-1 5M21 9l-5 1" stroke="#111" stroke-width="1.6" fill="none"/><path d="M5 3v8M9 3v8M2 5.5h10M2 8.5h10" stroke="#222"/></svg></div>
                    <div class="hud-cell d-flex align-items-center justify-content-center"><svg width="30" height="30" viewBox="0 0 30 30"><path d="M8 6c4-3 14-4 18-2 1 6 1 12-1 15-6 3-13 3-16 1-2-4-3-10-1-14z" fill="url(#teal)" stroke="#2a9c80"/><ellipse cx="17" cy="12" rx="5" ry="6" fill="#b8e860" stroke="#2a8c60"/><path d="M2 26l7-4 2 3-8 4z" fill="#c8e850" stroke="#3c8c50"/></svg></div>
                    <div class="hud-cell d-flex align-items-center justify-content-center"><svg width="30" height="30" viewBox="0 0 30 30"><path d="M4 27L26 4" stroke="#2f9c88" stroke-width="1.8"/><rect x="2" y="25" width="3.5" height="3.5" fill="#d8ffd8" stroke="#1c5c3c"/><rect x="25" y="2" width="3.5" height="3.5" fill="#d8ffd8" stroke="#1c5c3c"/></svg></div>
                    <div class="hud-cell d-flex align-items-center justify-content-center"><svg width="30" height="30" viewBox="0 0 30 30"><path d="M4 27L26 4" stroke="#2f9c88" stroke-width="2" stroke-dasharray="5 3"/><rect x="2" y="25" width="3.5" height="3.5" fill="#d8ffd8" stroke="#1c5c3c"/><rect x="25" y="2" width="3.5" height="3.5" fill="#d8ffd8" stroke="#1c5c3c"/></svg></div>
                    <div class="hud-cell d-flex align-items-center justify-content-center"><svg width="30" height="30" viewBox="0 0 30 30"><circle cx="15" cy="15" r="13" fill="none" stroke="#2f9c88" stroke-width="1.8"/><rect x="13.5" y="13.5" width="3.5" height="3.5" fill="#d8ffd8" stroke="#1c5c3c"/><rect x="22" y="4" width="3.5" height="3.5" fill="#d8ffd8" stroke="#1c5c3c"/></svg></div>
                    <div class="hud-cell d-flex align-items-center justify-content-center"><svg width="30" height="30" viewBox="0 0 30 30"><path d="M3 22C3 6 27 6 27 22" fill="none" stroke="#2f9c88" stroke-width="1.8"/><rect x="1.5" y="21" width="3.5" height="3.5" fill="#d8ffd8" stroke="#1c5c3c"/><rect x="25" y="21" width="3.5" height="3.5" fill="#d8ffd8" stroke="#1c5c3c"/><rect x="13.5" y="8" width="3.5" height="3.5" fill="#d8ffd8" stroke="#1c5c3c"/><rect x="13" y="22" width="4" height="4" fill="#7ce8a0"/></svg></div>
                    <div class="hud-cell d-flex align-items-center justify-content-center"><svg width="30" height="30" viewBox="0 0 30 30"><rect x="3" y="6" width="24" height="19" fill="none" stroke="#2f9c88" stroke-width="1.8"/><rect x="25" y="4" width="3.5" height="3.5" fill="#d8ffd8" stroke="#1c5c3c"/><rect x="1.5" y="23" width="3.5" height="3.5" fill="#d8ffd8" stroke="#1c5c3c"/></svg></div>
                    <div class="hud-cell d-flex align-items-center justify-content-center"><svg width="30" height="30" viewBox="0 0 30 30"><rect x="3" y="6" width="24" height="19" fill="none" stroke="#2f9c88" stroke-width="1.8"/><rect x="25" y="4" width="3.5" height="3.5" fill="#d8ffd8" stroke="#1c5c3c"/><rect x="13" y="14" width="3.5" height="3.5" fill="#d8ffd8" stroke="#1c5c3c"/></svg></div>
                    <div class="hud-cell d-flex align-items-center justify-content-center"><svg width="30" height="30" viewBox="0 0 30 30" fill="none" stroke="#16d835" stroke-width="1.6"><circle cx="7" cy="6" r="4"/><circle cx="7" cy="19" r="4"/><path d="M10 9l18 10M10 16L28 6M2 26h26M21 2v27"/></svg></div>
                    <div class="hud-cell d-flex align-items-center justify-content-center"><svg width="30" height="30" viewBox="0 0 30 30" fill="none" stroke="#2f8c78" stroke-width="1.8"><path d="M2 15L17 2l12 13M2 15l11 13"/><path d="M7 16L20 6" stroke="#154c2c" stroke-width="2"/><path d="M5 18l2-5 3 3zM22 4l-2 5-3-3z" fill="#154c2c" stroke="none"/></svg></div>
                    <div class="hud-cell d-flex align-items-center justify-content-center"><svg width="30" height="30" viewBox="0 0 30 30" fill="none" stroke="#16d835" stroke-width="1.8"><path d="M5 6l17 20c3 3 7 0 5-3L10 3C7 0 2 3 5 7l15 18"/></svg></div>
                    <div class="hud-cell d-flex align-items-center justify-content-center"><svg width="30" height="30" viewBox="0 0 30 30"><path d="M6 8l17-5v21L6 29z" fill="url(#teal)" stroke="#2f8c78"/><path d="M15 0v30" stroke="#154c2c" stroke-dasharray="5 3"/></svg></div>
                    <div class="hud-cell d-flex align-items-center justify-content-center"><svg width="30" height="30" viewBox="0 0 30 30"><circle cx="18" cy="11" r="10" fill="#a8f0b0" stroke="#2f8c78"/><path d="M11 18L3 27" stroke="#2f8c78" stroke-width="4"/><path d="M18 4l-3 3h6zM18 18l-3-3h6zM11 11l3-3v6zM25 11l-3-3v6z" fill="#154c2c"/></svg></div>
                    <div class="hud-cell d-flex align-items-center justify-content-center"><svg width="30" height="30" viewBox="0 0 30 30"><path d="M10 2h18v18" fill="none" stroke="#154c2c" stroke-dasharray="3 2"/><circle cx="16" cy="13" r="9" fill="#a8f0b0" stroke="#2f8c78"/><path d="M10 20L3 27" stroke="#2f8c78" stroke-width="4"/></svg></div>
                    <div class="hud-cell d-flex align-items-center justify-content-center"><svg width="30" height="30" viewBox="0 0 30 30"><path d="M2 20L24 3l5 6-20 17z" fill="#b8f0b8" stroke="#2f8c78"/><ellipse cx="5" cy="23" rx="3.5" ry="5" fill="#98e0a8" stroke="#2f8c78"/><path d="M28 21H18v-3l-6 5 6 5v-3h10z" fill="#1f9c80"/></svg></div>
                    <div class="hud-cell d-flex align-items-center justify-content-center"><svg width="30" height="30" viewBox="0 0 30 30"><path d="M4 9c0-3 22-8 24-4v18c-6 3-18 5-24 5z" fill="#98f0a8" stroke="#2f8c78"/><path d="M4 12h8v16H4zM20 10h8v14h-8z" fill="#2f9c88"/></svg></div>
                    <div class="hud-cell d-flex align-items-center justify-content-center"><svg width="30" height="30" viewBox="0 0 30 30"><path d="M6 20L24 3l4 4L12 27z" fill="#c8f0c0" stroke="#2f8c78"/><path d="M11 1L5 11h5l-3 7 9-11h-5l2-6z" fill="#b8e830" stroke="#5c8c18"/><path d="M12 29l6-14 6 14M14 24h8" fill="none" stroke="#1f8c80" stroke-width="1.8"/></svg></div>
                    <div class="hud-cell d-flex align-items-center justify-content-center"><svg width="30" height="30" viewBox="0 0 30 30"><path d="M1 9l8-8h20v20l-8 8H1z" fill="#98f0b0" stroke="#2f8c78"/><rect x="1" y="9" width="20" height="20" fill="url(#teal)" stroke="#2f8c78"/><path d="M14 3v8M11 8l3 3 3-3M28 20h-9M22 17l-3 3 3 3" fill="none" stroke="#154c2c" stroke-width="1.4"/></svg></div>
                    <div class="hud-dd d-flex align-items-center justify-content-center"><span class="dd"></span></div>
                    <div class="hud-cell d-flex align-items-center justify-content-center"><svg width="26" height="30" viewBox="0 0 26 30"><path d="M1 6l8-5 16 4v19l-12 5-12-5z" fill="#b0f0b8" stroke="#2f8c78"/><path d="M1 6l12 5v18l-12-5z" fill="url(#teal)" stroke="#2f8c78"/></svg></div>
                    <div class="hud-dd d-flex align-items-center justify-content-center"><span class="dd"></span></div>
                    <div class="hud-cell d-flex align-items-center justify-content-center"><svg width="30" height="30" viewBox="0 0 30 30"><ellipse cx="15" cy="15" rx="14" ry="13" fill="#7ce880"/><ellipse cx="15" cy="15" rx="9" ry="10" fill="#b8f0b8" stroke="#3c8c50"/><ellipse cx="14" cy="15" rx="6" ry="9" fill="#1c5c2c"/><path d="M15 0v30" stroke="#154c2c" stroke-width="1.5"/></svg></div>
                    <div class="hud-dd d-flex align-items-center justify-content-center"><span class="dd"></span></div>
                    <div class="hud-cell d-flex align-items-center justify-content-center"><svg width="32" height="34" viewBox="0 0 32 34"><ellipse cx="15" cy="14" rx="13" ry="14" fill="#7fd838" stroke="#3c8c50"/><path d="M15 14V0A13 14 0 0 0 2 14z" fill="#1c8ca0"/><path d="M15 14V0A13 14 0 0 1 28 14z" fill="#a86c30"/><path d="M17 31L28 20l3 3-11 10z" fill="#b8e830" stroke="#3c6c18"/></svg></div>
                    <div class="hud-cell d-flex align-items-center justify-content-center"><svg width="30" height="34" viewBox="0 0 30 34"><ellipse cx="15" cy="13" rx="12" ry="13" fill="#7fd838" stroke="#3c8c50"/><path d="M15 13V0A12 13 0 0 0 3 13z" fill="#1c8ca0"/><path d="M15 13V0A12 13 0 0 1 27 13z" fill="#a86c30"/><rect x="1" y="18" width="28" height="15" fill="#f0fff0" stroke="#154c2c"/><path d="M1 24h7v5h7v-5h7v5h7M8 18v6M22 18v6" fill="none" stroke="#154c2c" stroke-width="3"/></svg></div>
                    <div class="hud-dd d-flex align-items-center justify-content-center"><span class="dd"></span></div>
                    <div class="hud-cell d-flex align-items-center justify-content-center"><svg width="26" height="30" viewBox="0 0 26 30"><rect x="1" y="2" width="24" height="20" fill="#b0e8a8" stroke="#154c2c" stroke-width="1.6"/><path d="M13 22v5M7 28h12" stroke="#154c2c" stroke-width="2"/></svg></div>
                    <div class="hud-dd d-flex align-items-center justify-content-center"><span class="dd"></span></div>
                    <div class="hud-cell d-flex align-items-center justify-content-center"><svg width="28" height="30" viewBox="0 0 28 30"><path d="M14 5l12-4v24l-6 4-6-6z" fill="#b8f0c0" stroke="#2f8c78"/><path d="M1 14l12-5 6 3v10l-12 5-6-3z" fill="url(#teal)" stroke="#2f8c78"/></svg></div>
                    <div class="hud-cell d-flex align-items-center justify-content-center"><svg width="24" height="30" viewBox="0 0 24 30"><path d="M1 6l20-5v23l-20 5z" fill="#c0f0c8" stroke="#2f8c78"/><path d="M7 10l9-2v12l-9 3z" fill="#2f9c88" stroke="#154c2c"/></svg></div>
                    <div class="hud-cell d-flex align-items-center justify-content-center"><svg width="24" height="30" viewBox="0 0 24 30"><path d="M1 7c0-4 20-8 22-4v21l-9 5-13-6z" fill="#c0f0c8" stroke="#2f8c78"/><path d="M1 7l13 4 9-5c0-4-22-3-22 1z" fill="#2f9c88"/><path d="M14 11v18" stroke="#2f8c78"/></svg></div>
                    <div class="hud-cell d-flex align-items-center justify-content-center"><svg width="28" height="30" viewBox="0 0 28 30"><path d="M14 19L27 25l-13 5-13-5z" fill="#4cb898" stroke="#2f8c78"/><path d="M14 24V4" stroke="#154c2c" stroke-width="2"/><path d="M9 7l5-6 5 6z" fill="#154c2c"/></svg></div>
                    <div class="hud-cell d-flex align-items-center justify-content-center"><svg width="30" height="30" viewBox="0 0 30 30"><path d="M5 22L24 3l4 4L12 27z" fill="#c8f0c0" stroke="#2f8c78"/><ellipse cx="8" cy="24" rx="3.5" ry="5" fill="#98e0a8" stroke="#2f8c78"/><circle cx="7" cy="7" r="3" fill="#b8e830" stroke="#6c8c18" stroke-width="2" stroke-dasharray="1.5 1"/></svg></div>
                    <div class="hud-cell d-flex align-items-center justify-content-center"><svg width="28" height="28" viewBox="0 0 28 28"><rect x="1" y="1" width="26" height="26" fill="#b0f0b0" stroke="#154c2c"/><rect x="1" y="1" width="26" height="5" fill="#2f9c88"/><path d="M14 6v21M1 16h26" stroke="#154c2c" stroke-width="1.4"/></svg></div>
                    <div class="hud-cell d-flex align-items-center justify-content-center"><svg width="24" height="28" viewBox="0 0 24 28" fill="#20f040" stroke="#16d835"><path d="M9 3l7-2 6 3v9l-7 2-6-3zM2 12l7-2 6 3v9l-7 5-6-3z"/></svg></div>
                    <div class="hud-cell d-flex align-items-center justify-content-center"><svg width="24" height="28" viewBox="0 0 24 28" fill="#20f040" stroke="#16d835"><path d="M1 5l12-4 10 4v17l-10 5-12-5zM1 5l12 5 10-5M13 10v17"/></svg></div>
                    <div class="hud-cell d-flex align-items-center justify-content-center"><svg width="28" height="28" viewBox="0 0 28 28" fill="none" stroke="#14c830" stroke-width="1.5"><path d="M27 1L14 18 1 27M14 18l13 8"/><circle cx="14" cy="18" r="2"/></svg></div>
                    <div class="hud-cell d-flex align-items-center justify-content-center"><svg width="28" height="28" viewBox="0 0 28 28" fill="none" stroke="#14c830" stroke-width="1.5"><path d="M1 1c5 6 13 6 26 26M27 1C20 6 12 16 5 27"/><circle cx="14" cy="13" r="2.5"/></svg></div>
                </div>

                <svg class="part-view position-absolute" width="92" height="94" viewBox="0 0 92 94">
                    <rect x="1" y="1" width="90" height="91" fill="#c4c4c4" stroke="#222" stroke-width="1.5"/>
                    <rect x="5" y="5" width="82" height="83" fill="none" stroke="#555"/>
                    <rect x="11" y="12" width="70" height="70" fill="#0f0" stroke="#000" stroke-width="2.5"/>
                    <path d="M6 6l5 6M86 6l-5 6M6 87l5-5M86 87l-5-5" stroke="#111" stroke-width="1.5"/>
                    <path d="M45 46H30M45 46v40" stroke="#00f" stroke-width="1.2"/>
                    <path d="M24 46l11-3v6zM45 88l-4-12h7z" fill="#00f"/>
                    <path d="M42 43l6 6M48 43l-6 6M41 46h8M45 42v8" stroke="#00f"/>
                </svg>
                <svg class="triad-view position-absolute" width="60" height="72" viewBox="0 0 60 72">
                    <text x="0" y="12" font-family="Liberation Serif" font-size="12" fill="#e81c1c">X</text>
                    <path d="M18 12h28" stroke="#c82020" stroke-width="5"/><path d="M19 12h26" stroke="#f08080" stroke-width="1.5"/>
                    <path d="M8 12l11-5v10z" fill="#c82020"/>
                    <path d="M47 14v26" stroke="#2e7a2e" stroke-width="5"/><path d="M47 14v26" stroke="#9ad09a" stroke-width="1.5"/>
                    <path d="M47 50l-6-12h12z" fill="#1c5c1c"/>
                    <circle cx="47" cy="12" r="5.5" fill="#1a1a9c"/>
                    <text x="43" y="62" font-family="Liberation Serif" font-size="12" fill="#2e8c2e">Y</text>
                </svg>
            </div>
        </div>
    </div>

    <!-- bottom -->
    <div class="sheet-row d-flex align-items-stretch">
        <div class="sheet-edge"></div>
        <div class="sheet-nav d-flex"><span>|◀</span><span>◀</span><span>▶</span><span>▶|</span></div>
        <div class="sheet-tab sheet-a">模型</div>
        <div class="sheet-tab sheet-b">3D 视图</div>
        <div class="sheet-tab sheet-c">运动算例 1</div>
    </div>
    <div class="status-row d-flex">
        <span class="status-name">SOLIDWORKS Premium 2018 SP5.0</span>
        <div class="status-gap"></div>
        <div class="status-edit">在编辑 零件</div>
        <div class="status-units d-flex align-items-center">MMGS<span class="status-up"></span>
            <svg class="ms-auto me-1" width="17" height="17" viewBox="0 0 17 17"><path d="M1 6l9-5 6 5v5l-6 5-9-5z" fill="#ddd" stroke="#555"/><path d="M1 6l9 5 6-5M10 11v5" fill="none" stroke="#555"/></svg>
        </div>
    </div>
</div>
</body>
</html>
